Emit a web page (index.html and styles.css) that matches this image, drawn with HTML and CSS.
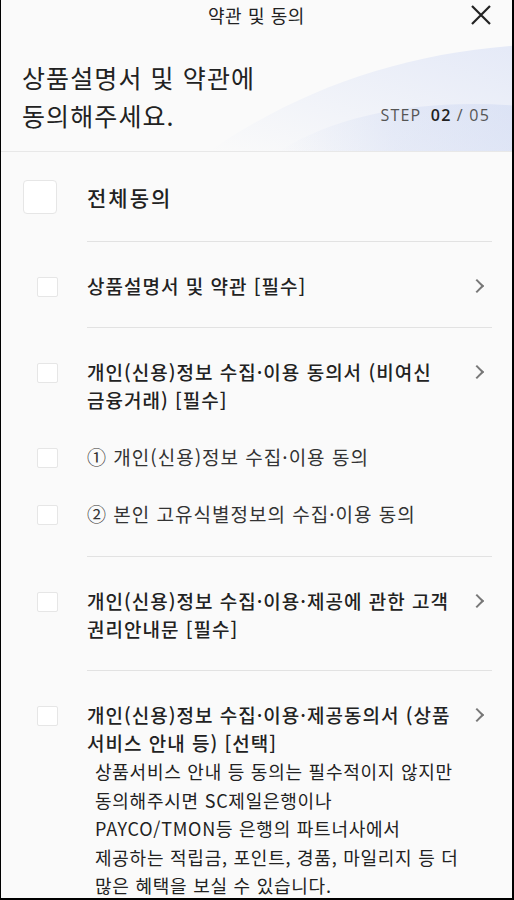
FILE: index.html
```html
<!DOCTYPE html>
<html lang="ko">
<head>
    <meta charset="UTF-8">
    <meta name="viewport" content="width=device-width, initial-scale=1.0">
    <title>약관 및 동의</title>
    <link rel="stylesheet" href="styles.css">
</head>
<body>

    <div class="page">
        <div class="topbar">
            <span class="topbar-title">약관 및 동의</span>
            <svg class="close-icon" width="22" height="22" viewBox="0 0 22 22">
                <path d="M2 2 L20 20 M20 2 L2 20" stroke="#222" stroke-width="2.2" fill="none"/>
            </svg>
        </div>

        <div class="header">
            <svg class="wave" width="514" height="122" viewBox="0 0 514 122" preserveAspectRatio="none">
                <defs>
                    <linearGradient id="waveA" x1="0" y1="1" x2="1" y2="0">
                        <stop offset="0" stop-color="#d3dcf5" stop-opacity="0"/>
                        <stop offset="0.55" stop-color="#d3dcf5" stop-opacity="0.3"/>
                        <stop offset="1" stop-color="#d3dcf5" stop-opacity="0.55"/>
                    </linearGradient>
                    <linearGradient id="waveB" x1="0" y1="0" x2="1" y2="0">
                        <stop offset="0" stop-color="#c6d2f1" stop-opacity="0"/>
                        <stop offset="0.5" stop-color="#c6d2f1" stop-opacity="0.3"/>
                        <stop offset="1" stop-color="#c6d2f1" stop-opacity="0.4"/>
                    </linearGradient>
                </defs>
                <path d="M210 122 C300 60 400 25 514 16 L514 122 Z" fill="url(#waveA)"/>
                <path d="M280 122 C340 85 420 70 514 76 L514 122 Z" fill="url(#waveB)"/>
            </svg>
            <h1 class="heading">상품설명서 및 약관에<br>동의해주세요.</h1>
            <div class="step">STEP <b>02</b> / 05</div>
        </div>

        <div class="terms">
            <div class="row row-all">
                <div class="check-col"><span class="box box-big"></span></div>
                <div class="row-text all-text">전체동의</div>
            </div>
            <div class="divider"></div>

            <div class="row">
                <div class="check-col"><span class="box"></span></div>
                <div class="row-text">상품설명서 및 약관 [필수]</div>
                <span class="chevron"></span>
            </div>
            <div class="divider"></div>

            <div class="row">
                <div class="check-col"><span class="box"></span></div>
                <div class="row-text">개인(신용)정보 수집·이용 동의서 (비여신 금융거래) [필수]</div>
                <span class="chevron"></span>
            </div>
            <div class="row sub">
                <div class="check-col"><span class="box"></span></div>
                <div class="row-text">① 개인(신용)정보 수집·이용 동의</div>
            </div>
            <div class="row sub">
                <div class="check-col"><span class="box"></span></div>
                <div class="row-text">② 본인 고유식별정보의 수집·이용 동의</div>
            </div>
            <div class="divider"></div>

            <div class="row">
                <div class="check-col"><span class="box"></span></div>
                <div class="row-text">개인(신용)정보 수집·이용·제공에 관한 고객 권리안내문 [필수]</div>
                <span class="chevron"></span>
            </div>
            <div class="divider"></div>

            <div class="row row-last">
                <div class="check-col"><span class="box"></span></div>
                <div class="row-text">
                    개인(신용)정보 수집·이용·제공동의서 (상품 서비스 안내 등) [선택]
                    <p class="desc">상품서비스 안내 등 동의는 필수적이지 않지만 동의해주시면 SC제일은행이나 PAYCO/TMON등 은행의 파트너사에서 제공하는 적립금, 포인트, 경품, 마일리지 등 더 많은 혜택을 보실 수 있습니다.</p>
                </div>
                <span class="chevron"></span>
            </div>
        </div>
    </div>

</body>
</html>
```

FILE: styles.css
```css
/* 기본 */
body {
    margin: 0;
    background: #000;
    font-family: 'Noto Sans CJK KR', 'Noto Sans', sans-serif;
    color: #222;
    word-break: keep-all;
}

.page {
    box-sizing: border-box;
    width: 514px;
    height: 900px;
    border-left: 1px solid #000;
    border-right: 2px solid #000;
    border-bottom: 2px solid #000;
    background: #fafafa;
    overflow: hidden;
}

/* 상단 바 */
.topbar {
    position: relative;
    height: 30px;
    display: flex;
    justify-content: center;
    align-items: center;
}

.topbar-title {
    font-size: 18px;
    line-height: 30px;
    letter-spacing: 0.6px;
}

.close-icon {
    position: absolute;
    right: 20px;
    top: 4px;
}

/* 헤더 */
.header {
    position: relative;
    display: flex;
    justify-content: space-between;
    align-items: flex-end;
    padding: 28px 22px 17px 21px;
    border-bottom: 1px solid #e8e8e8;
}

.wave {
    position: absolute;
    left: 0;
    top: 0;
    width: 100%;
    height: 100%;
}

.heading {
    position: relative;
    margin: 0;
    font-size: 25px;
    font-weight: 400;
    line-height: 38px;
    letter-spacing: 1.1px;
}

.step {
    position: relative;
    font-family: 'Open Sans', 'Noto Sans', sans-serif;
    font-size: 16px;
    color: #555;
    letter-spacing: 1.2px;
    padding-bottom: 8px;
}

.step b {
    color: #222;
    font-weight: 600;
    margin-left: 4px;
}

/* 약관 목록 */
.terms {
    padding-top: 28px;
}

.row {
    display: flex;
    align-items: flex-start;
    padding: 30px 0 27px;
}

.row-all {
    padding: 0 0 27px;
    align-items: center;
}

.row.sub {
    padding: 29px 0 0;
}

.row.sub + .divider {
    margin-top: 28px;
}

.row:has(+ .row.sub) {
    padding-bottom: 0;
}

.check-col {
    width: 86px;
    flex-shrink: 0;
}

.box {
    display: block;
    box-sizing: border-box;
    width: 21px;
    height: 20px;
    margin: 5px 0 0 36px;
    background: #fff;
    border: 1px solid #e6e6e6;
    border-radius: 2px;
}

.box-big {
    width: 34px;
    height: 34px;
    margin: 0 0 0 22px;
    border-radius: 4px;
}

.row-text {
    flex: 1;
    font-size: 19px;
    font-weight: 500;
    line-height: 28px;
    letter-spacing: 1px;
    padding-right: 8px;
}

.all-text {
    font-size: 21px;
    letter-spacing: 2px;
}

.sub .row-text {
    font-weight: 400;
    color: #333;
}

.chevron {
    flex-shrink: 0;
    width: 8px;
    height: 8px;
    margin: 9px 30px 0 0;
    border-top: 2px solid #777;
    border-right: 2px solid #777;
    transform: rotate(45deg);
}

.desc {
    margin: 0 0 0 8px;
    font-size: 18px;
    font-weight: 400;
    line-height: 28.5px;
    letter-spacing: 0.75px;
}

.divider {
    height: 1px;
    background: #e2e2e2;
    margin: 0 20px 0 86px;
}
```
